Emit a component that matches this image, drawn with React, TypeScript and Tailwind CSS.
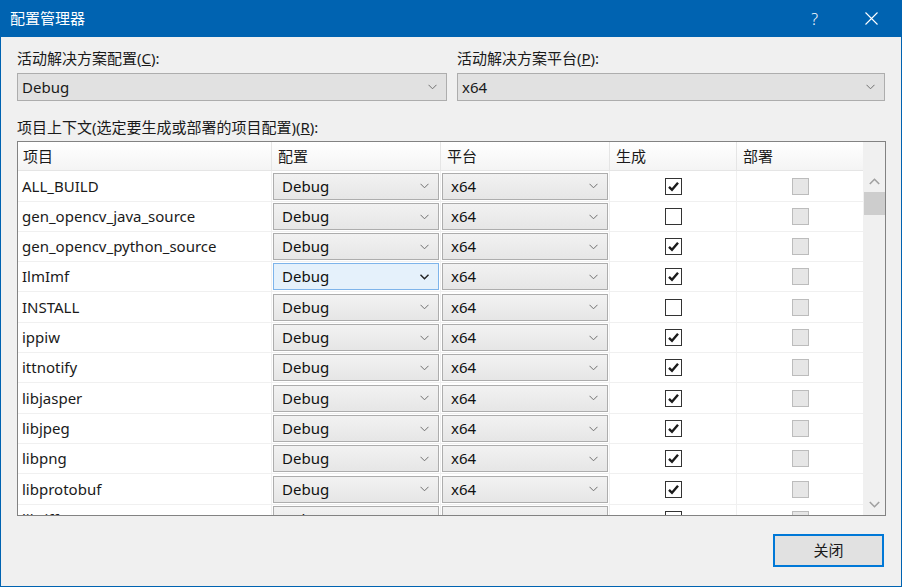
import React from 'react';

const FONT = { fontFamily: '"Noto Sans", "Noto Sans CJK SC", sans-serif' };

interface Project {
  name: string;
  build: boolean;
}

const projects: Project[] = [
  { name: 'ALL_BUILD', build: true },
  { name: 'gen_opencv_java_source', build: false },
  { name: 'gen_opencv_python_source', build: true },
  { name: 'IlmImf', build: true },
  { name: 'INSTALL', build: false },
  { name: 'ippiw', build: true },
  { name: 'ittnotify', build: true },
  { name: 'libjasper', build: true },
  { name: 'libjpeg', build: true },
  { name: 'libpng', build: true },
  { name: 'libprotobuf', build: true },
  { name: 'libtiff', build: true },
];

// row heights drift between 30 and 31px in the original dialog
const tall = [0, 4, 7, 10];

function Chevron({ dark = false }: { dark?: boolean }) {
  return (
    <svg width="9" height="6" viewBox="0 0 9 6" className="shrink-0">
      <polyline
        points="0.5,0.8 4.5,4.8 8.5,0.8"
        fill="none"
        stroke={dark ? '#202020' : '#707070'}
        strokeWidth={dark ? 1.4 : 1}
      />
    </svg>
  );
}

function Combo({ value, active = false }: { value: string; active?: boolean }) {
  return (
    <div
      className={`flex h-[27px] w-[166px] items-center justify-between border pl-[8px] pr-[9px] text-[15px] text-[#111] ${
        active ? 'border-[#7eb4ea] bg-[#e5f1fb]' : 'border-[#adadad] bg-gradient-to-b from-[#f2f2f2] to-[#e6e6e6]'
      }`}
    >
      <span className="leading-none">{value}</span>
      <Chevron dark={active} />
    </div>
  );
}

function CheckBox({ checked, disabled = false }: { checked: boolean; disabled?: boolean }) {
  if (disabled) {
    return <div className="h-[17px] w-[17px] border border-[#bcbcbc] bg-[#e6e6e6]" />;
  }
  return (
    <div className="flex h-[17px] w-[17px] items-center justify-center border border-[#333] bg-white">
      {checked && (
        <svg width="13" height="13" viewBox="0 0 13 13">
          <path d="M2 6.8 L5 9.8 L11 2.8" fill="none" stroke="#1a1a1a" strokeWidth="2.4" strokeLinejoin="miter" />
        </svg>
      )}
    </div>
  );
}

export default function App() {
  return (
    <div
      className="flex h-[587px] w-[902px] flex-col border border-t-0 border-[#0063b1] bg-[#f0f0f0] text-[15px] text-[#1a1a1a]"
      style={FONT}
    >
      {/* Title bar */}
      <div className="-mx-px flex h-[37px] shrink-0 items-center bg-[#0063b1] text-white">
        <span className="ml-[10px] flex-1 text-[15px]">配置管理器</span>
        <span className="mr-[47px] text-[16px] font-light">?</span>
        <svg width="13" height="13" viewBox="0 0 13 13" className="mr-[24px]">
          <path d="M0.5 0.5 L12.5 12.5 M12.5 0.5 L0.5 12.5" stroke="white" strokeWidth="1.1" />
        </svg>
      </div>

      <div className="flex flex-1 flex-col px-[16px]">
        {/* Solution config + platform */}
        <div className="mt-[11px] flex gap-[10px]">
          <div className="flex w-[431px] flex-col gap-[4px]">
            <span className="h-[21px] leading-[21px]">
              活动解决方案配置(<span className="underline">C</span>):
            </span>
            <div className="flex h-[28px] items-center justify-between border border-[#adadad] bg-[#e1e1e1] pl-[4px] pr-[9px]">
              <span>Debug</span>
              <Chevron />
            </div>
          </div>
          <div className="flex w-[429px] flex-col gap-[4px]">
            <span className="h-[21px] leading-[21px]">
              活动解决方案平台(<span className="underline">P</span>):
            </span>
            <div className="flex h-[28px] items-center justify-between border border-[#adadad] bg-[#e1e1e1] pl-[4px] pr-[9px]">
              <span>x64</span>
              <Chevron />
            </div>
          </div>
        </div>

        <span className="mt-[16px] h-[21px] leading-[21px]">
          项目上下文(选定要生成或部署的项目配置)(<span className="underline">R</span>):
        </span>

        {/* Project grid */}
        <div className="mt-[3px] flex h-[375px] w-[869px] border border-[#828282] bg-white">
          <div className="flex w-[845px] flex-col overflow-hidden">
            <div className="flex h-[29px] shrink-0 border-b border-[#e5e5e5] bg-gradient-to-b from-white to-[#f4f4f4]">
              <div className="flex w-[254px] items-center border-r border-[#e5e5e5] pl-[5px]">项目</div>
              <div className="flex w-[169px] items-center border-r border-[#e5e5e5] pl-[6px]">配置</div>
              <div className="flex w-[169px] items-center border-r border-[#e5e5e5] pl-[6px]">平台</div>
              <div className="flex w-[127px] items-center border-r border-[#e5e5e5] pl-[6px]">生成</div>
              <div className="flex w-[126px] items-center pl-[6px]">部署</div>
            </div>
            {projects.map((p, i) => (
              <div
                key={p.name}
                className={`flex shrink-0 border-b border-[#f0f0f0] ${tall.includes(i) ? 'h-[31px]' : 'h-[30px]'}`}
              >
                <div className="flex w-[254px] items-center border-r border-[#f0f0f0] pl-[4px]">{p.name}</div>
                <div className="flex w-[169px] items-center border-r border-[#f0f0f0] pl-[1px]">
                  <Combo value="Debug" active={i === 3} />
                </div>
                <div className="flex w-[169px] items-center border-r border-[#f0f0f0] pl-[1px]">
                  <Combo value="x64" />
                </div>
                <div className="flex w-[127px] items-center justify-center border-r border-[#f0f0f0]">
                  <CheckBox checked={p.build} />
                </div>
                <div className="flex w-[126px] items-center justify-center">
                  <CheckBox checked={false} disabled />
                </div>
              </div>
            ))}
          </div>

          {/* Scrollbar */}
          <div className="flex w-[22px] flex-col bg-[#f0f0f0]">
            <div className="h-[29px]" />
            <div className="flex h-[21px] items-center justify-center">
              <svg width="11" height="7" viewBox="0 0 11 7">
                <polyline points="0.8,6 5.5,1.3 10.2,6" fill="none" stroke="#a0a0a0" strokeWidth="1.6" />
              </svg>
            </div>
            <div className="mx-auto h-[23px] w-[21px] bg-[#cdcdcd]" />
            <div className="flex-1" />
            <div className="flex h-[21px] items-center justify-center">
              <svg width="11" height="7" viewBox="0 0 11 7">
                <polyline points="0.8,1 5.5,5.7 10.2,1" fill="none" stroke="#a0a0a0" strokeWidth="1.6" />
              </svg>
            </div>
          </div>
        </div>

        <div className="mt-[18px] flex justify-end">
          <button className="mr-[1px] h-[33px] w-[111px] border-2 border-[#0078d7] bg-[#e1e1e1] text-[15px] text-[#1a1a1a]">
            关闭
          </button>
        </div>
      </div>
    </div>
  );
}
